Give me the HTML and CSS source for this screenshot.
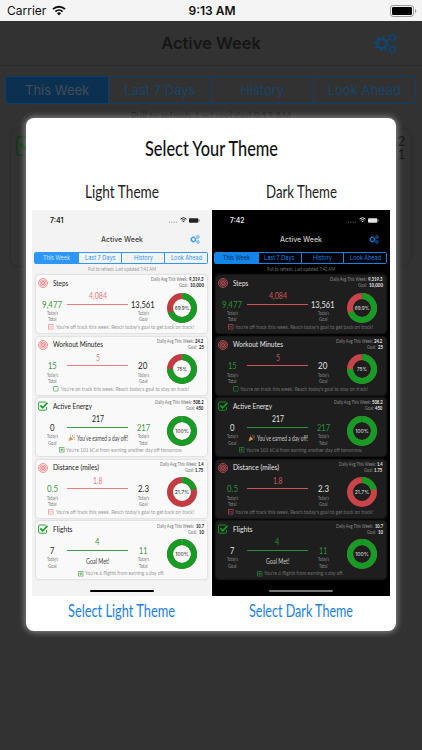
FILE: index.html
```
<!DOCTYPE html>
<html lang="en">
  <head>
    <meta charset="utf-8">
    <title>Active Week</title>
    <link rel="stylesheet" href="styles.css">
  </head>
  <body>
    <svg class="defs" width="0" height="0">
      <symbol id="wifi" viewBox="0 0 14 11">
        <path d="M1 4.1a8.6 8.6 0 0 1 12 0" fill="none" stroke="currentColor" stroke-width="2"/>
        <path d="M3.4 6.6a5.2 5.2 0 0 1 7.2 0" fill="none" stroke="currentColor" stroke-width="1.9"/>
        <path d="M4.9 8.3a3 3 0 0 1 4.2 0L7 10.6z" fill="currentColor"/>
      </symbol>
      <symbol id="gears" viewBox="0 0 22 20">
        <g fill="none" stroke="currentColor">
          <circle cx="7.5" cy="10" r="4.4" stroke-width="2.4"/>
          <circle cx="7.5" cy="10" r="6.3" stroke-width="2" stroke-dasharray="2.47 2.47"/>
          <circle cx="17.5" cy="4.3" r="2.5" stroke-width="1.3"/>
          <circle cx="17.5" cy="4.3" r="3.6" stroke-width="1.2" stroke-dasharray="1.41 1.41"/>
          <circle cx="17.5" cy="15.7" r="2.5" stroke-width="1.3"/>
          <circle cx="17.5" cy="15.7" r="3.6" stroke-width="1.2" stroke-dasharray="1.41 1.41"/>
        </g>
      </symbol>
      <symbol id="target" viewBox="0 0 10 10">
        <g fill="none" stroke="currentColor" stroke-width=".8">
          <circle cx="5" cy="5" r="4.5"/>
          <circle cx="5" cy="5" r="3.1"/>
          <circle cx="5" cy="5" r="1.7"/>
        </g>
        <circle cx="5" cy="5" r=".8" fill="currentColor"/>
      </symbol>
      <symbol id="check" viewBox="0 0 10 10">
        <path d="M8.6 6v2.2a1 1 0 0 1-1 1H1.6a1 1 0 0 1-1-1V2a1 1 0 0 1 1-1h6.2" fill="none" stroke="currentColor" stroke-width=".9"/>
        <path d="M2.4 4.4l2.3 2.4 4.8-5" fill="none" stroke="currentColor" stroke-width="1.7"/>
      </symbol>
      <symbol id="box-minus" viewBox="0 0 6 6">
        <path d="M.5 .5h5v5h-5zM1.5 3h3" fill="none" stroke="currentColor" stroke-width=".7"/>
      </symbol>
      <symbol id="box-plus" viewBox="0 0 6 6">
        <path d="M.5 .5h5v5h-5zM1.3 3h3.4M3 1.3v3.4" fill="none" stroke="currentColor" stroke-width=".7"/>
      </symbol>
      <symbol id="box-empty" viewBox="0 0 6 6">
        <rect x=".5" y=".5" width="5" height="5" rx=".6" fill="none" stroke="currentColor" stroke-width=".7"/>
      </symbol>
      <symbol id="party" viewBox="0 0 8 8">
        <path d="M.5 7.6L2.4 2.4l3.2 3.2z" fill="#e9a93c"/>
        <path d="M1.4 5.1l1.5 1.6M2 3.5l2.4 2.5" stroke="#9b5a2a" stroke-width=".5"/>
        <path d="M4.3 3.4q1.4-.8.9-2.6" fill="none" stroke="#e0524d" stroke-width=".8"/>
        <path d="M5 4.5q1-1 2.5-.5" fill="none" stroke="#4c8fd8" stroke-width=".7"/>
        <circle cx="2.7" cy="1" r=".5" fill="#4c8fd8"/>
        <circle cx="6.7" cy="2.2" r=".5" fill="#e9a93c"/>
        <circle cx="7" cy="6" r=".5" fill="#e0524d"/>
      </symbol>
    </svg>

    <header class="status-bar">
      <div class="carrier">Carrier <svg width="14" height="11"><use href="#wifi"/></svg></div>
      <div class="clock">9:13 AM</div>
      <div class="battery">
        <svg width="27" height="12" viewBox="0 0 27 12">
          <rect x=".5" y=".5" width="23" height="11" rx="2.6" fill="none" stroke="#999"/>
          <rect x="2" y="2" width="20" height="8" rx="1.2"/>
          <path d="M25 4q1.3.4 1.3 2T25 8z" fill="#999"/>
        </svg>
      </div>
    </header>

    <div class="nav-bar">
      <h1 class="nav-title">Active Week</h1>
      <svg class="nav-gears" width="23" height="21"><use href="#gears"/></svg>
    </div>
    <nav class="tabs">
      <span class="tab active">This Week</span>
      <span class="tab">Last 7 Days</span>
      <span class="tab">History</span>
      <span class="tab">Look Ahead</span>
    </nav>
    <div class="refresh" data-fit="Pull to refresh.  Last updated 9:13 AM" data-width="160" data-size="11.5"></div>
    <section class="back-card">
      <svg class="back-check" width="20" height="20" viewBox="0 0 20 20">
        <rect x=".7" y=".7" width="18.6" height="18.6" rx="3.5" fill="none" stroke="currentColor" stroke-width="1.5"/>
        <path d="M5 8l4 4.5 8-8" fill="none" stroke="currentColor" stroke-width="3.5"/>
      </svg>
      <div class="back-values"><span>9.2</span><span>1</span></div>
    </section>

    <div class="modal">
      <h2 class="modal-title" data-fit="Select Your Theme" data-width="133" data-size="20.8"></h2>
      <div class="themes">
        <div class="theme">
          <div class="theme-name" data-fit="Light Theme" data-width="74" data-size="17.8"></div>
          <div class="phone light" data-time="7:41"></div>
          <div class="theme-select" data-fit="Select Light Theme" data-width="107" data-size="17.8"></div>
        </div>
        <div class="theme">
          <div class="theme-name" data-fit="Dark Theme" data-width="71" data-size="17.8"></div>
          <div class="phone dark" data-time="7:42"></div>
          <div class="theme-select" data-fit="Select Dark Theme" data-width="104" data-size="17.8"></div>
        </div>
      </div>
    </div>
    <script src="script.js"></script>
  </body>
</html>
```

FILE: styles.css
```
* {
  box-sizing: border-box;
}
body {
  margin: 0;
  width: 422px;
  height: 750px;
  overflow: hidden;
  position: relative;
  background: #323232;
  font-family: Inter, "Liberation Sans", sans-serif;
}
svg {
  display: block;
  flex: none;
  overflow: visible;
}
.defs {
  position: absolute;
}
.fit {
  font-family: Lato, "Open Sans", sans-serif;
  fill: currentColor;
}
.fit-inter {
  font-family: Inter, sans-serif;
}

/* Status bar */
.status-bar {
  display: grid;
  grid-template-columns: 1fr 1fr 1fr;
  align-items: center;
  height: 21px;
  padding: 0 5px 0 7px;
  background: #f4f4f4;
  color: #111;
  font-size: 12px;
}
.carrier {
  display: flex;
  align-items: center;
  gap: 6px;
}
.clock {
  text-align: center;
  font-weight: 600;
}
.battery {
  justify-self: end;
}

/* Dimmed screen behind the dialog */
.nav-bar {
  display: grid;
  grid-template-columns: 1fr auto 1fr;
  align-items: center;
  height: 45px;
  border-bottom: 1px solid #2a2a2a;
}
.nav-title {
  grid-column: 2;
  margin: 0;
  font-size: 16.5px;
  line-height: 20px;
  font-weight: 600;
  color: #161616;
}
.nav-gears {
  justify-self: end;
  margin-right: 25px;
  color: #12466f;
}
.tabs {
  display: grid;
  grid-template-columns: repeat(4, 1fr);
  height: 28px;
  margin: 10px 6px 0 5px;
  border: 1px solid #103e68;
  border-radius: 4px;
  overflow: hidden;
}
.tab {
  border-left: 1px solid #103e68;
  text-align: center;
  font-size: 13px;
  line-height: 26px;
  color: #174569;
}
.tab.active {
  border-left: 0;
  background: #0c3050;
  color: #414d57;
}
.refresh {
  display: flex;
  justify-content: center;
  margin-top: 3.5px;
  color: #202020;
}
.back-card {
  display: flex;
  justify-content: space-between;
  height: 137px;
  margin: 7.5px 11px 0 10px;
  padding: 6px 5px;
  border: 1px solid #2e2e2e;
  border-radius: 8px;
  box-shadow: 0 0 3px #2c2c2c;
}
.back-check {
  color: #0a3a12;
}
.back-values {
  display: flex;
  flex-direction: column;
  align-items: flex-end;
  margin-top: -1px;
  font-family: Lato, sans-serif;
  font-size: 13px;
  line-height: 13px;
  color: #111;
}

/* Dialog */
.modal {
  position: absolute;
  left: 26px;
  top: 118px;
  width: 370px;
  height: 513px;
  padding: 16.5px 6px 0;
  border-radius: 8px;
  background: #fff;
  box-shadow: 0 0 6px 1px rgba(255, 255, 255, .45);
}
.modal-title {
  display: flex;
  justify-content: center;
  margin: 0;
  height: 45.5px;
  font-weight: 500;
  color: #111;
}
.themes {
  display: grid;
  grid-template-columns: 179px 178px;
  gap: 1px;
}
.theme {
  display: flex;
  flex-direction: column;
  align-items: center;
}
.theme-name {
  height: 30px;
  color: #222;
}
.theme-select {
  padding-top: 3.3px;
  color: #1a80e8;
}

/* Theme previews */
.phone {
  --bg: #f3f3f3;
  --card: #f9f9f9;
  --edge: #dedede;
  --ink: #222;
  --title: #444;
  --muted: #999;
  --caption: #777;
  --blue: #2e96f5;
  --tab-on: #c9e5ff;
  --green: #159c25;
  --num-green: #3a9a45;
  --red: #c23b40;
  --num-red: #ef7b80;
  --home: #000;
  width: 100%;
  height: 386px;
  background: var(--bg);
  color: var(--ink);
}
.phone.dark {
  --bg: #000;
  --card: #1e1e1e;
  --edge: #1b1b1b;
  --ink: #e4e4e4;
  --title: #c8c8c8;
  --muted: #707070;
  --caption: #8a8a8a;
  --blue: #1384e8;
  --tab-on: #06325e;
  --num-green: #2c8f38;
  --red: #c94448;
  --num-red: #cf5359;
  --home: #777;
}
.phone-status {
  display: flex;
  align-items: center;
  height: 20px;
  padding: 0 11px 0 17.5px;
}
.phone-icons {
  display: flex;
  align-items: center;
  gap: 2.5px;
  margin-left: auto;
}
.phone-nav {
  display: grid;
  grid-template-columns: 1fr auto 1fr;
  align-items: center;
  height: 18px;
  color: var(--title);
}
.phone-gears {
  justify-self: end;
  margin-right: 11.5px;
  color: var(--blue);
}
.phone-title {
  grid-column: 2;
}
.phone-tabs {
  display: grid;
  grid-template-columns: repeat(4, 1fr);
  height: 12px;
  margin: 4px 3px 0 2px;
  border: .7px solid var(--blue);
  border-radius: 1.5px;
  color: var(--blue);
}
.phone-tab {
  display: flex;
  align-items: center;
  justify-content: center;
  border-left: .7px solid var(--blue);
}
.phone-tab:first-child {
  border-left: 0;
  background: var(--blue);
  color: var(--tab-on);
}
.phone-refresh {
  display: flex;
  justify-content: center;
  height: 11px;
  padding-top: 1.7px;
  color: var(--muted);
}
.cards {
  display: grid;
  gap: 3.6px;
  padding: 0 4.5px 0 3.5px;
}
.card {
  height: 58px;
  border-radius: 3.5px;
  background: var(--card);
  box-shadow: 0 0 1.5px 1px var(--edge);
}
.card-head {
  display: flex;
  height: 14px;
  padding: 3px 3px 0 2.5px;
}
.card-icon {
  color: var(--num-red);
}
.card-icon.done {
  color: var(--green);
}
.card-title {
  margin: -.5px 0 0 4.7px;
}
.card-avg {
  display: flex;
  flex-direction: column;
  align-items: flex-end;
  margin: -1.8px 0 0 auto;
}
.avg-row {
  display: flex;
  gap: 1.3px;
  height: 6px;
}
.avg-label {
  color: var(--caption);
}
.card-body {
  display: grid;
  grid-template-columns: 26px 61px 26px 30px;
  column-gap: 2px;
  height: 34px;
  padding-left: 3.5px;
}
.stat {
  display: flex;
  flex-direction: column;
  align-items: center;
  padding-top: 9.5px;
}
.stat-caption {
  height: 6.4px;
  color: var(--caption);
}
.stat-number {
  height: 11.5px;
}
.middle {
  display: flex;
  flex-direction: column;
  align-items: center;
  padding-top: 1px;
}
.rule {
  width: 100%;
  height: 1px;
  margin: 2.9px 0 6px;
  background: currentColor;
}
.note {
  display: flex;
  align-items: center;
  gap: 1.5px;
  color: var(--title);
}
.donut {
  margin: 3.5px 0 0 8.7px;
}
.card-foot {
  display: flex;
  justify-content: center;
  gap: 1.4px;
  height: 10px;
  color: var(--muted);
}
.card-foot .box {
  margin-top: 1.2px;
}
.ink {
  color: var(--ink);
}
.green {
  color: var(--num-green);
}
.red {
  color: var(--num-red);
}
.home {
  width: 64px;
  height: 2px;
  margin: 11px auto 0;
  border-radius: 1px;
  background: var(--home);
}
```

FILE: script.js
```
// One line of text set to an exact width, for the condensed labels
function fit(text, width, size, cls, weight) {
  const h = size * 1.2;
  return `<svg width="${width}" height="${h}"><text class="fit ${cls || ''}" y="${size}" font-size="${size}" font-weight="${weight || 400}" textLength="${width}" lengthAdjust="spacingAndGlyphs">${text}</text></svg>`;
}

function icon(id, w, h, cls) {
  return `<svg class="${cls || ''}" width="${w}" height="${h}"><use href="#${id}"/></svg>`;
}

// Each label is [text, width]
const cards = [
  {
    title: ['Steps', 15.3], avg: ['9,319.3', 14.5, 36.7], goal: ['10,000', 14, 9],
    left: ['9,477', 20, 'green', 'Total'], right: ['13,561', 23.5, 'ink', 'Goal'],
    mid: ['4,084', 18, 'red'], line: 'red', pct: 69.9,
    box: 'box-minus', foot: ["You're off track this week.  Reach today's goal to get back on track!", 138]
  },
  {
    title: ['Workout Minutes', 50], avg: ['24.2', 8.3, 37], goal: ['25', 5, 9],
    left: ['15', 8.7, 'green', 'Total'], right: ['20', 9.3, 'ink', 'Goal'],
    mid: ['5', 4, 'red'], line: 'red', pct: 75,
    box: 'box-empty', foot: ["You're on track this week.  Reach today's goal to stay on track!", 128]
  },
  {
    title: ['Active Energy', 39], avg: ['508.2', 10.7, 37], goal: ['450', 7.3, 9], done: true,
    left: ['0', 4.5, 'ink', 'Goal'], right: ['217', 13, 'green', 'Total'],
    mid: ['217', 12, 'ink'], line: 'green', pct: 100, note: ["You've earned a day off!", 51], party: true,
    box: 'box-plus', foot: ["You're 101 kCal from earning another day off tomorrow.", 116.5]
  },
  {
    title: ['Distance (miles)', 46], avg: ['1.4', 5.7, 37], goal: ['1.75', 8.3, 9],
    left: ['0.5', 11, 'green', 'Total'], right: ['2.3', 11, 'ink', 'Goal'],
    mid: ['1.8', 9.5, 'red'], line: 'red', pct: 21.7,
    box: 'box-minus', foot: ["You're off track this week.  Reach today's goal to get back on track!", 138]
  },
  {
    title: ['Flights', 19.5], avg: ['10.7', 8, 37], goal: ['10', 5, 9], done: true,
    left: ['7', 4.3, 'ink', 'Goal'], right: ['11', 8.3, 'green', 'Total'],
    mid: ['4', 4.3, 'green'], line: 'green', pct: 100, note: ['Goal Met!', 23.5],
    box: 'box-plus', foot: ["You're 6 flights from earning a day off.", 79.5]
  }
];

function stat(s) {
  return `<div class="stat">
    <div class="stat-number ${s[2]}">${fit(s[0], s[1], 9.4)}</div>
    <div class="stat-caption">${fit("Today's", 11, 5)}</div>
    <div class="stat-caption">${fit(s[3], 8.5, 5)}</div>
  </div>`;
}

function donut(pct) {
  const w = String(pct).length > 3 ? 14.5 : pct === 100 ? 13.5 : 10;
  return `<svg class="donut" width="30" height="30" viewBox="0 0 30 30">
    <circle cx="15" cy="15" r="12" fill="none" stroke="var(--red)" stroke-width="6"/>
    <circle cx="15" cy="15" r="12" fill="none" stroke="var(--green)" stroke-width="6" pathLength="100" stroke-dasharray="${pct} 100" transform="rotate(-90 15 15)"/>
    <path d="M15 0v5" stroke="var(--card)" stroke-width=".3" opacity=".5"/>
    <text class="fit fit-inter" x="${15 - w / 2}" y="16.9" font-size="5.2" textLength="${w}" lengthAdjust="spacingAndGlyphs">${pct}%</text>
  </svg>`;
}

function card(c) {
  const boxColor = c.box === 'box-minus' ? 'red' : 'green';
  return `<div class="card">
    <div class="card-head">
      ${icon(c.done ? 'check' : 'target', 10, 10, c.done ? 'card-icon done' : 'card-icon')}
      <div class="card-title">${fit(c.title[0], c.title[1], 8.4)}</div>
      <div class="card-avg">
        <div class="avg-row"><span class="avg-label">${fit('Daily Avg This Week:', c.avg[2], 4.7)}</span>${fit(c.avg[0], c.avg[1], 4.7, '', 700)}</div>
        <div class="avg-row"><span class="avg-label">${fit('Goal:', c.goal[2], 4.7)}</span>${fit(c.goal[0], c.goal[1], 4.7, '', 700)}</div>
      </div>
    </div>
    <div class="card-body">
      ${stat(c.left)}
      <div class="middle">
        <div class="${c.mid[2]}">${fit(c.mid[0], c.mid[1], 9)}</div>
        <div class="rule ${c.line}"></div>
        ${c.note ? `<div class="note">${c.party ? icon('party', 7.5, 7.5) : ''}${fit(c.note[0], c.note[1], 7)}</div>` : ''}
      </div>
      ${stat(c.right)}
      ${donut(c.pct)}
    </div>
    <div class="card-foot">${icon(c.box, 5.7, 5.7, 'box ' + boxColor)}${fit(c.foot[0], c.foot[1], 6.4)}</div>
  </div>`;
}

document.querySelectorAll('.phone').forEach(function(el) {
  const time = el.dataset.time;
  const tabs = [['This Week', 27], ['Last 7 Days', 30.5], ['History', 19], ['Look Ahead', 31]];
  el.innerHTML = `
    <div class="phone-status">
      ${fit(time, time === '7:41' ? 13.5 : 14.5, 7.4, 'fit-inter', 600)}
      <div class="phone-icons">
        <svg width="8" height="5"><path d="M0 4.2h8" stroke="currentColor" stroke-width=".8" stroke-dasharray="1 1.3" opacity=".6"/></svg>
        ${icon('wifi', 7, 5.5)}
        <svg width="11" height="5"><rect y=".3" width="9.3" height="4.4" rx="1" fill="currentColor"/><path d="M10.2 1.6v1.8" stroke="currentColor" stroke-width=".6"/></svg>
      </div>
    </div>
    <div class="phone-nav">
      <div class="phone-title">${fit('Active Week', 42, 7.3, 'fit-inter', 500)}</div>
      ${icon('gears', 10, 9, 'phone-gears')}
    </div>
    <div class="phone-tabs">
      ${tabs.map(t => `<div class="phone-tab">${fit(t[0], t[1], 6, 'fit-inter')}</div>`).join('')}
    </div>
    <div class="phone-refresh">${fit('Pull to refresh.  Last updated ' + time + ' AM', 68, 5)}</div>
    <div class="cards">${cards.map(card).join('')}</div>
    <div class="home"></div>`;
});

document.querySelectorAll('[data-fit]').forEach(function(el) {
  const weight = el.classList.contains('modal-title') ? 500 : 400;
  el.innerHTML = fit(el.dataset.fit, el.dataset.width, Number(el.dataset.size), '', weight);
});
```
